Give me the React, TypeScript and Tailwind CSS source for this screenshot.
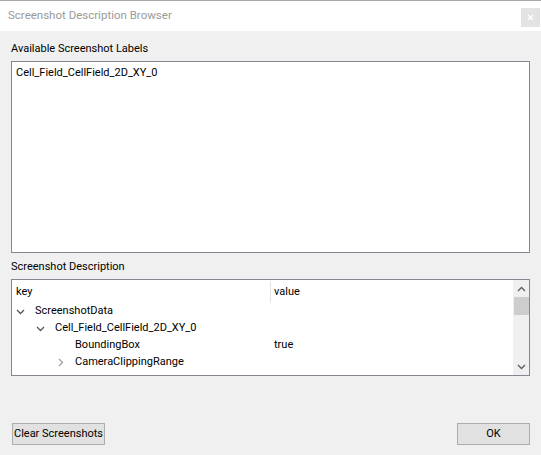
import React from "react";

const font = { fontFamily: 'Roboto, "Noto Sans", sans-serif' };

function ChevDown() {
  return (
    <svg width="9" height="6" viewBox="0 0 9 6">
      <path d="M1 1 L4.5 4.5 L8 1" fill="none" stroke="#555" strokeWidth="1.3" />
    </svg>
  );
}
function ChevRight() {
  return (
    <svg width="6" height="9" viewBox="0 0 6 9">
      <path d="M1 1 L4.5 4.5 L1 8" fill="none" stroke="#a0a0a0" strokeWidth="1.3" />
    </svg>
  );
}

export default function App() {
  return (
    <div
      className="w-[541px] h-[455px] bg-[#f0f0f0] flex flex-col text-[11px] text-black overflow-hidden border-t border-[#aaaaaa]"
      style={font}
    >
      {/* Title bar */}
      <div className="h-[30px] bg-white flex items-center justify-between pl-[8px] pr-[1px]">
        <span className="text-[#9a9a9a] text-[11.5px]">Screenshot Description Browser</span>
        <div className="w-[19px] h-[19px] bg-[#e3e3e3] flex items-center justify-center mt-[3px]">
          <svg width="7" height="7" viewBox="0 0 7 7">
            <path d="M1 1 L6 6 M6 1 L1 6" stroke="#ffffff" strokeWidth="1.4" />
          </svg>
        </div>
      </div>

      <div className="flex flex-col px-[11px] pt-[8px]">
        <div className="h-[20px] leading-[20px]">Available Screenshot Labels</div>
        <div className="mt-[2px] h-[192px] bg-white border border-[#828790] px-[4px] pt-[2px]">
          <div className="leading-[17px]">Cell_Field_CellField_2D_XY_0</div>
        </div>

        <div className="mt-[4px] h-[20px] leading-[20px]">Screenshot Description</div>
        <div className="mt-[2px] h-[97px] bg-white border border-[#828790] flex">
          <div className="flex-1 flex flex-col">
            <div className="h-[23px] flex items-center">
              <div className="w-[258px] pl-[4px] leading-[23px]">key</div>
              <div className="w-px h-[22px] bg-[#e5e5e5]" />
              <div className="pl-[3px] leading-[23px]">value</div>
            </div>
            <div className="h-[17px] flex items-center">
              <div className="w-[23px] pl-[4px]"><ChevDown /></div>
              <span>ScreenshotData</span>
            </div>
            <div className="h-[17px] flex items-center">
              <div className="w-[43px] pl-[24px]"><ChevDown /></div>
              <span>Cell_Field_CellField_2D_XY_0</span>
            </div>
            <div className="h-[17px] flex items-center">
              <div className="w-[262px] pl-[63px]">BoundingBox</div>
              <span>true</span>
            </div>
            <div className="h-[17px] flex items-center">
              <div className="w-[63px] pl-[46px]"><ChevRight /></div>
              <span>CameraClippingRange</span>
            </div>
          </div>
          <div className="w-[16px] bg-[#f0f0f0] flex flex-col items-center">
            <div className="h-[17px] flex items-center justify-center">
              <svg width="9" height="6" viewBox="0 0 9 6">
                <path d="M1 5 L4.5 1.5 L8 5" fill="none" stroke="#606060" strokeWidth="1.4" />
              </svg>
            </div>
            <div className="w-[15px] h-[18px] bg-[#cdcdcd]" />
            <div className="flex-1" />
            <div className="h-[17px] flex items-center justify-center">
              <svg width="9" height="6" viewBox="0 0 9 6">
                <path d="M1 1 L4.5 4.5 L8 1" fill="none" stroke="#606060" strokeWidth="1.4" />
              </svg>
            </div>
          </div>
        </div>

        <div className="mt-[47px] flex justify-between pl-[1px]">
          <button className="h-[22px] w-[93px] whitespace-nowrap bg-[#e1e1e1] border border-[#adadad] text-[11px] leading-[20px] text-black">
            Clear Screenshots
          </button>
          <button className="h-[22px] w-[73px] bg-[#e1e1e1] border border-[#adadad] text-[11px] leading-[20px] text-black">
            OK
          </button>
        </div>
      </div>
    </div>
  );
}
